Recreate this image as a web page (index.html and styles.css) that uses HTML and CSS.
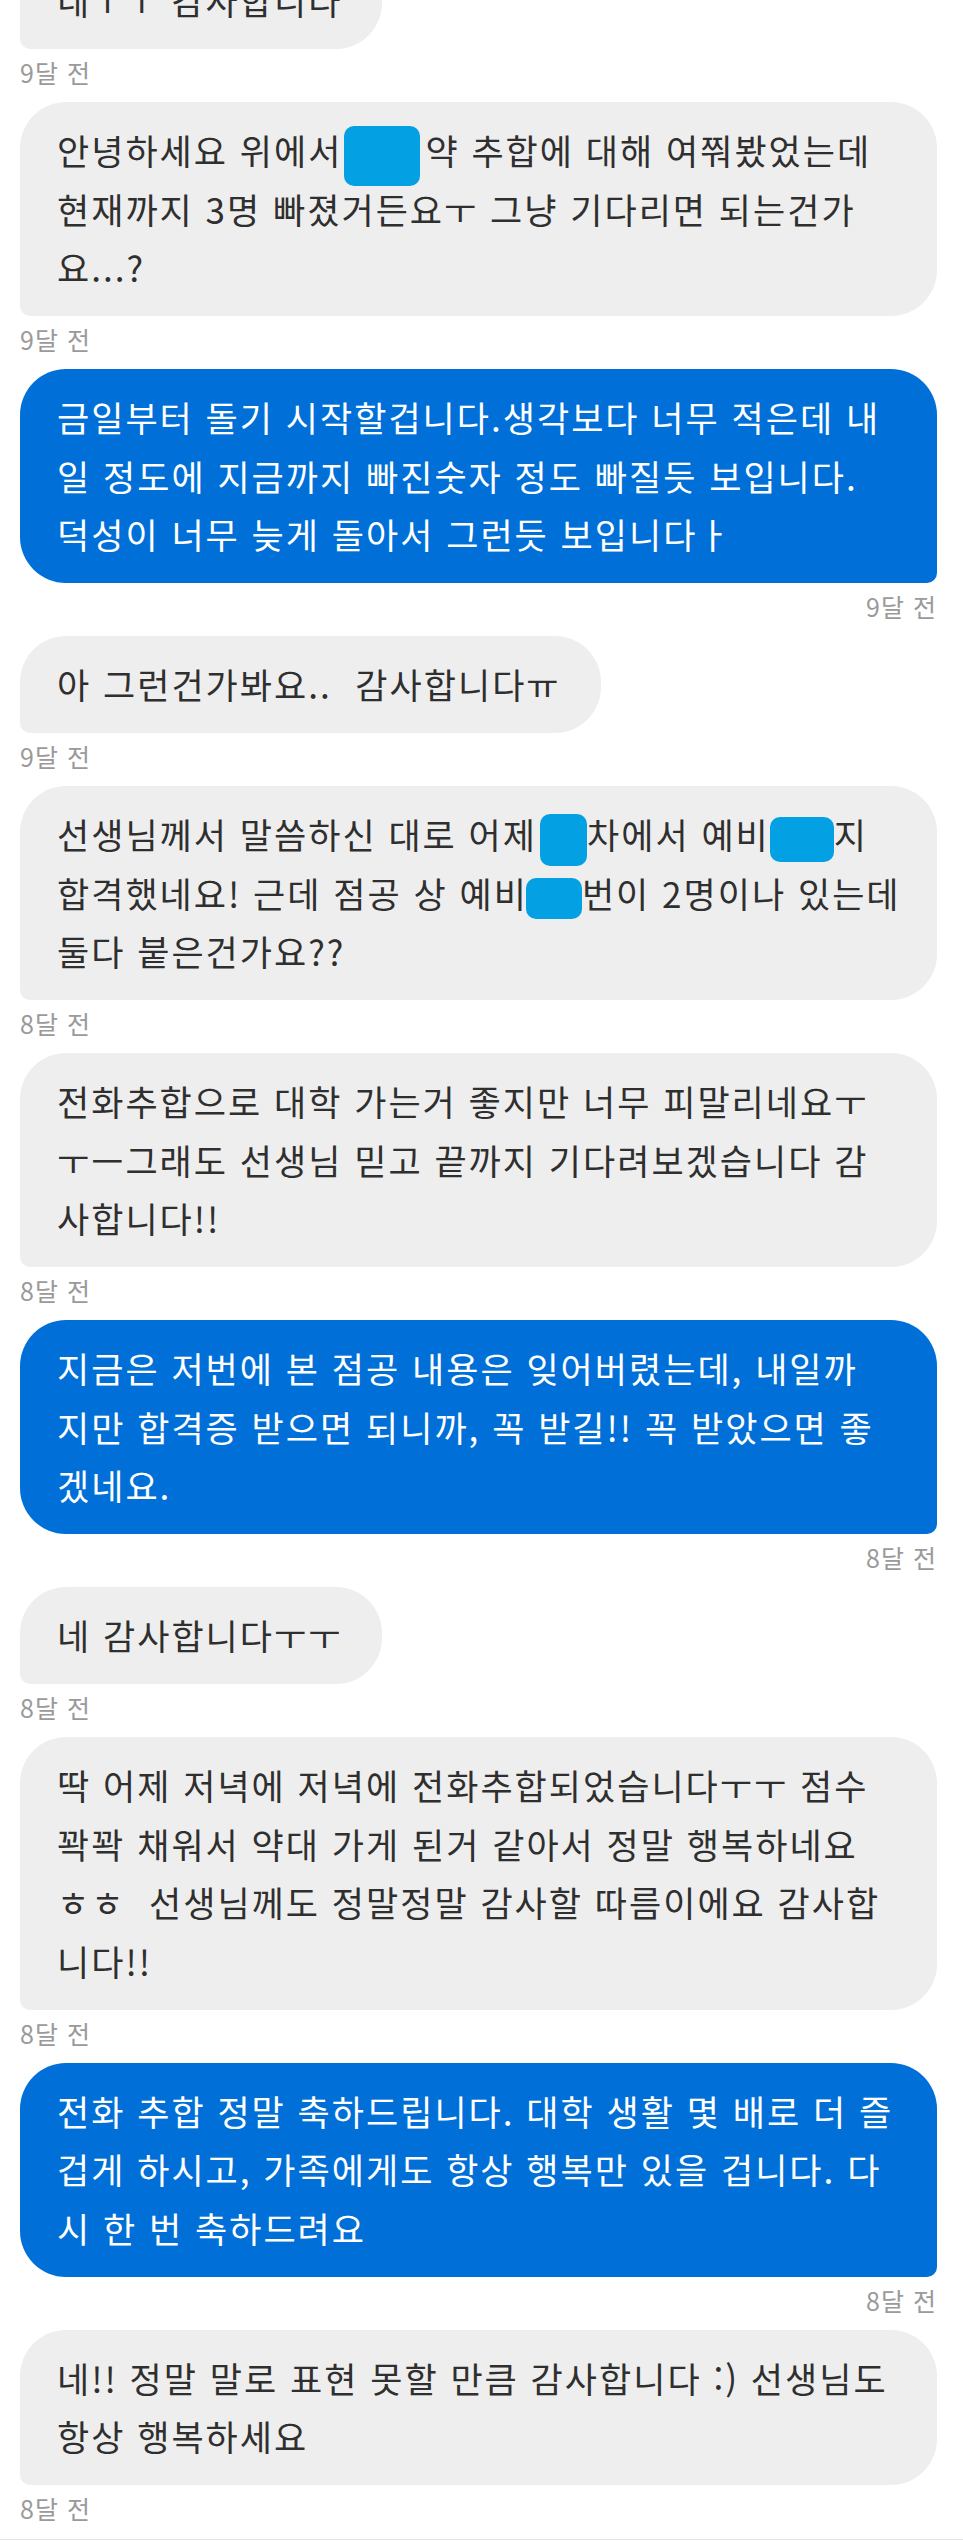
FILE: index.html
```html
<!DOCTYPE html>
<html lang="ko">
<head>
<meta charset="utf-8">
<title>메시지</title>
<link rel="stylesheet" href="styles.css">
</head>
<body>
<main class="chat">
  <div class="msg">
    <div class="bubble">네ㅜㅜ 감사합니다</div>
    <div class="time">9달 전</div>
  </div>
  <div class="msg">
    <div class="bubble wide">안녕하세요 위에서<span class="redact rd-a"></span>약 추합에 대해 여쭤봤었는데<br>현재까지 3명 빠졌거든요ㅜ 그냥 기다리면 되는건가<br>요...?</div>
    <div class="time">9달 전</div>
  </div>
  <div class="msg me">
    <div class="bubble wide">금일부터 돌기 시작할겁니다.생각보다 너무 적은데 내<br>일 정도에 지금까지 빠진숫자 정도 빠질듯 보입니다.<br>덕성이 너무 늦게 돌아서 그런듯 보입니다ㅏ</div>
    <div class="time">9달 전</div>
  </div>
  <div class="msg">
    <div class="bubble">아 그런건가봐요..&nbsp; 감사합니다ㅠ</div>
    <div class="time">9달 전</div>
  </div>
  <div class="msg">
    <div class="bubble wide">선생님께서 말씀하신 대로 어제<span class="redact rd-b"></span>차에서 예비<span class="redact rd-c"></span>지<br>합격했네요! 근데 점공 상 예비<span class="redact rd-d"></span>번이 2명이나 있는데<br>둘다 붙은건가요??</div>
    <div class="time">8달 전</div>
  </div>
  <div class="msg">
    <div class="bubble wide">전화추합으로 대학 가는거 좋지만 너무 피말리네요ㅜ<br>ㅜㅡ그래도 선생님 믿고 끝까지 기다려보겠습니다 감<br>사합니다!!</div>
    <div class="time">8달 전</div>
  </div>
  <div class="msg me">
    <div class="bubble wide">지금은 저번에 본 점공 내용은 잊어버렸는데, 내일까<br>지만 합격증 받으면 되니까, 꼭 받길!! 꼭 받았으면 좋<br>겠네요.</div>
    <div class="time">8달 전</div>
  </div>
  <div class="msg">
    <div class="bubble">네 감사합니다ㅜㅜ</div>
    <div class="time">8달 전</div>
  </div>
  <div class="msg">
    <div class="bubble wide">딱 어제 저녁에 저녁에 전화추합되었습니다ㅜㅜ 점수<br>꽉꽉 채워서 약대 가게 된거 같아서 정말 행복하네요<br>ㅎㅎ&nbsp; 선생님께도 정말정말 감사할 따름이에요 감사합<br>니다!!</div>
    <div class="time">8달 전</div>
  </div>
  <div class="msg me">
    <div class="bubble wide">전화 추합 정말 축하드립니다. 대학 생활 몇 배로 더 즐<br>겁게 하시고, 가족에게도 항상 행복만 있을 겁니다. 다<br>시 한 번 축하드려요</div>
    <div class="time">8달 전</div>
  </div>
  <div class="msg">
    <div class="bubble wide">네!! 정말 말로 표현 못할 만큼 감사합니다 :) 선생님도<br>항상 행복하세요</div>
    <div class="time">8달 전</div>
  </div>
</main>
<footer class="footer">
  <div class="bar"></div>
</footer>
</body>
</html>
```
FILE: styles.css
```css
html, body {
  margin: 0;
  padding: 0;
  background: #ffffff;
}

body {
  font-family: "Noto Sans CJK KR", "Noto Sans", sans-serif;
  overflow: hidden;
}

.chat {
  margin-top: -48px;
  padding: 0 26px 0 20px;
  display: flex;
  flex-direction: column;
}

.msg {
  display: flex;
  flex-direction: column;
  align-items: flex-start;
}

.msg.me {
  align-items: flex-end;
}

.bubble {
  box-sizing: border-box;
  max-width: 100%;
  padding: 19px 40px 19.5px 37px;
  font-size: 35px;
  line-height: 58.5px;
  letter-spacing: 2px;
  color: #2f2f2f;
  background: #eeeeee;
  border-radius: 46px 46px 46px 10px;
  white-space: nowrap;
}

.bubble.wide {
  align-self: stretch;
}

.me .bubble {
  background: #0070d8;
  color: #ffffff;
  border-radius: 46px 46px 10px 46px;
}

.time {
  margin: 7px 0 14px;
  font-size: 25px;
  line-height: 32px;
  letter-spacing: 1px;
  color: #9a9a9a;
}

.redact {
  display: inline-block;
  vertical-align: middle;
  background: #04a0e4;
  border-radius: 10px;
}

.rd-a {
  width: 76px;
  height: 60px;
  margin: -12px 5px -12px 2px;
}

.rd-b {
  width: 47px;
  height: 52px;
  margin: -10px 0 -10px 3px;
}

.rd-c {
  width: 64px;
  height: 45px;
  margin: -8px 0 -8px 0;
}

.rd-d {
  width: 56px;
  height: 41px;
  margin: -6px 0 -6px -2px;
}

.footer {
  margin-top: 1px;
  border-top: 1px solid #e6e6e6;
  padding-top: 11px;
}

.bar {
  height: 12px;
  background: #1c1c1c;
}
```
